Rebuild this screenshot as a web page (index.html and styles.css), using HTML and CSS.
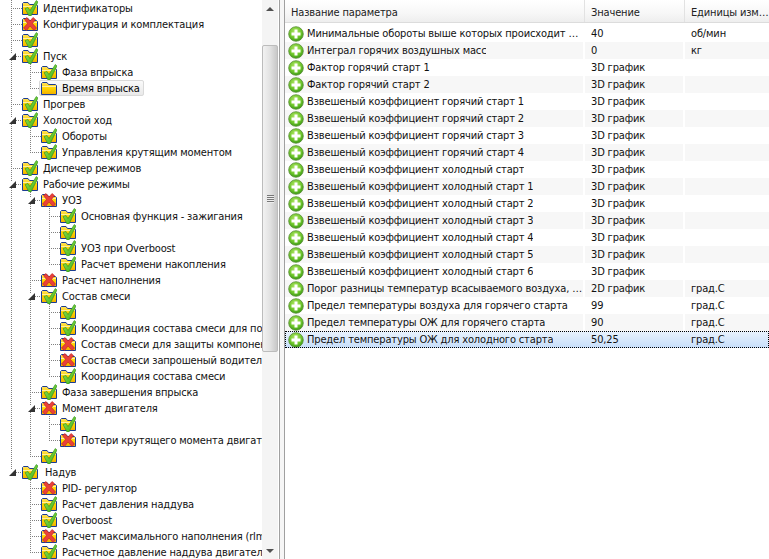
FILE: index.html
```html
<!DOCTYPE html>
<html lang="ru">
<head>
<meta charset="utf-8">
<title>Параметры</title>
<link rel="stylesheet" href="styles.css">
</head>
<body>
<svg class="defs" width="0" height="0" aria-hidden="true">
  <defs>
    <linearGradient id="fy" x1="0" y1="0" x2="0" y2="1"><stop offset="0" stop-color="#ffe060"/><stop offset=".5" stop-color="#ffd400"/><stop offset="1" stop-color="#f0ae00"/></linearGradient>
    <linearGradient id="fg" x1="0" y1="0" x2="1" y2="1"><stop offset="0" stop-color="#9fe84e"/><stop offset="1" stop-color="#35ad1a"/></linearGradient>
    <radialGradient id="bg" cx=".45" cy=".35" r=".7"><stop offset="0" stop-color="#b6e86c"/><stop offset=".6" stop-color="#6ec62a"/><stop offset="1" stop-color="#2e8f10"/></radialGradient>
    <symbol id="folder" viewBox="0 0 16 16"><path d="M.5 14.500V3.500l1-1h4.500l1.500 2h7l1 1v9z" fill="url(#fy)" stroke="#1a3c94"/><path d="M1 6.500h14" stroke="#fff0a0"/></symbol>
    <symbol id="ok" viewBox="0 0 16 16"><use href="#folder"/><path d="M3 8.500l3-1 2 3L14.300.5 16 2 9 16H7z" fill="url(#fg)" stroke="#2d8a1e" stroke-width=".6"/></symbol>
    <symbol id="err" viewBox="0 0 16 16"><use href="#folder"/><path d="M2.500 3.500l2.500-2 3 3.500 3-3.500 2.500 2-3 4 4 4.500-2.500 2.500L8 10l-3.500 4.500L1.500 12l4-4.500z" fill="#e8413a" stroke="#c0201c" stroke-width=".6"/></symbol>
    <symbol id="add" viewBox="0 0 16 16"><circle cx="8" cy="8" r="7.300" fill="url(#bg)" stroke="#5d8f3a" stroke-width=".8"/><path d="M6.500 3.500h3v3h3v3h-3v3h-3v-3h-3v-3h3z" fill="#fff"/></symbol>
    <symbol id="tri" viewBox="0 0 6 6"><path d="M6 0v6H0z" fill="#333"/></symbol>
  </defs>
</svg>
<div class="app">
  <div class="tree-pane">
    <div class="tree">
      <div class="row"><i class="c t"></i><svg class="ic"><use href="#ok"/></svg><span class="lbl">Идентификаторы</span></div>
      <div class="row"><i class="c t"></i><svg class="ic"><use href="#err"/></svg><span class="lbl">Конфигурация и комплектация</span></div>
      <div class="row"><i class="c t"></i><svg class="ic"><use href="#ok"/></svg></div>
      <div class="row"><i class="c x"><svg class="tri"><use href="#tri"/></svg></i><svg class="ic"><use href="#ok"/></svg><span class="lbl">Пуск</span></div>
      <div class="row"><i class="c g"></i><i class="c t"></i><svg class="ic"><use href="#ok"/></svg><span class="lbl">Фаза впрыска</span></div>
      <div class="row"><i class="c g"></i><i class="c l"></i><span class="sel"><svg class="ic"><use href="#folder"/></svg><span class="lbl">Время впрыска</span></span></div>
      <div class="row"><i class="c t"></i><svg class="ic"><use href="#ok"/></svg><span class="lbl">Прогрев</span></div>
      <div class="row"><i class="c x"><svg class="tri"><use href="#tri"/></svg></i><svg class="ic"><use href="#ok"/></svg><span class="lbl">Холостой ход</span></div>
      <div class="row"><i class="c g"></i><i class="c t"></i><svg class="ic"><use href="#ok"/></svg><span class="lbl">Обороты</span></div>
      <div class="row"><i class="c g"></i><i class="c l"></i><svg class="ic"><use href="#ok"/></svg><span class="lbl">Управления крутящим моментом</span></div>
      <div class="row"><i class="c t"></i><svg class="ic"><use href="#ok"/></svg><span class="lbl">Диспечер режимов</span></div>
      <div class="row"><i class="c x"><svg class="tri"><use href="#tri"/></svg></i><svg class="ic"><use href="#ok"/></svg><span class="lbl">Рабочие режимы</span></div>
      <div class="row"><i class="c g"></i><i class="c x"><svg class="tri"><use href="#tri"/></svg></i><svg class="ic"><use href="#err"/></svg><span class="lbl">УОЗ</span></div>
      <div class="row"><i class="c g"></i><i class="c g"></i><i class="c t"></i><svg class="ic"><use href="#ok"/></svg><span class="lbl">Основная функция - зажигания</span></div>
      <div class="row"><i class="c g"></i><i class="c g"></i><i class="c t"></i><svg class="ic"><use href="#ok"/></svg></div>
      <div class="row"><i class="c g"></i><i class="c g"></i><i class="c t"></i><svg class="ic"><use href="#ok"/></svg><span class="lbl">УОЗ при Overboost</span></div>
      <div class="row"><i class="c g"></i><i class="c g"></i><i class="c l"></i><svg class="ic"><use href="#ok"/></svg><span class="lbl">Расчет времени накопления</span></div>
      <div class="row"><i class="c g"></i><i class="c t"></i><svg class="ic"><use href="#err"/></svg><span class="lbl">Расчет наполнения</span></div>
      <div class="row"><i class="c g"></i><i class="c x"><svg class="tri"><use href="#tri"/></svg></i><svg class="ic"><use href="#ok"/></svg><span class="lbl">Состав смеси</span></div>
      <div class="row"><i class="c g"></i><i class="c g"></i><i class="c t"></i><svg class="ic"><use href="#ok"/></svg></div>
      <div class="row"><i class="c g"></i><i class="c g"></i><i class="c t"></i><svg class="ic"><use href="#ok"/></svg><span class="lbl">Координация состава смеси для подачи топлива</span></div>
      <div class="row"><i class="c g"></i><i class="c g"></i><i class="c t"></i><svg class="ic"><use href="#err"/></svg><span class="lbl">Состав смеси для защиты компонентов</span></div>
      <div class="row"><i class="c g"></i><i class="c g"></i><i class="c t"></i><svg class="ic"><use href="#err"/></svg><span class="lbl">Состав смеси запрошеный водителем</span></div>
      <div class="row"><i class="c g"></i><i class="c g"></i><i class="c l"></i><svg class="ic"><use href="#ok"/></svg><span class="lbl">Координация состава смеси</span></div>
      <div class="row"><i class="c g"></i><i class="c t"></i><svg class="ic"><use href="#ok"/></svg><span class="lbl">Фаза завершения впрыска</span></div>
      <div class="row"><i class="c g"></i><i class="c x"><svg class="tri"><use href="#tri"/></svg></i><svg class="ic"><use href="#err"/></svg><span class="lbl">Момент двигателя</span></div>
      <div class="row"><i class="c g"></i><i class="c g"></i><i class="c t"></i><svg class="ic"><use href="#ok"/></svg></div>
      <div class="row"><i class="c g"></i><i class="c g"></i><i class="c l"></i><svg class="ic"><use href="#err"/></svg><span class="lbl">Потери крутящего момента двигателя</span></div>
      <div class="row"><i class="c g"></i><i class="c l"></i><svg class="ic"><use href="#ok"/></svg></div>
      <div class="row"><i class="c x end"><svg class="tri"><use href="#tri"/></svg></i><svg class="ic"><use href="#ok"/></svg><span class="lbl lbl-far">Надув</span></div>
      <div class="row"><i class="c"></i><i class="c t"></i><svg class="ic"><use href="#err"/></svg><span class="lbl">PID- регулятор</span></div>
      <div class="row"><i class="c"></i><i class="c t"></i><svg class="ic"><use href="#ok"/></svg><span class="lbl">Расчет давления наддува</span></div>
      <div class="row"><i class="c"></i><i class="c t"></i><svg class="ic"><use href="#ok"/></svg><span class="lbl">Overboost</span></div>
      <div class="row"><i class="c"></i><i class="c t"></i><svg class="ic"><use href="#err"/></svg><span class="lbl">Расчет максимального наполнения (rlmax)</span></div>
      <div class="row"><i class="c"></i><i class="c l"></i><svg class="ic"><use href="#ok"/></svg><span class="lbl">Расчетное давление наддува двигателя</span></div>
    </div>
    <div class="sb">
      <div class="sb-btn"><span class="arr up"></span></div>
      <div class="sb-track"><div class="sb-thumb"><span class="grip"></span></div></div>
      <div class="sb-btn"><span class="arr down"></span></div>
    </div>
  </div>
  <div class="splitter"></div>
  <div class="grid-pane">
    <div class="head">
      <div class="hc">Название параметра</div>
      <div class="hc">Значение</div>
      <div class="hc">Единицы измерения</div>
    </div>
    <div class="rows">
      <div class="gr"><div class="gc n"><svg class="ic"><use href="#add"/></svg><span class="tx">Минимальные обороты выше которых происходит отсечка топлива</span></div><div class="gc">40</div><div class="gc">об/мин</div></div>
      <div class="gr"><div class="gc n"><svg class="ic"><use href="#add"/></svg><span class="tx">Интеграл горячих воздушных масс</span></div><div class="gc">0</div><div class="gc">кг</div></div>
      <div class="gr"><div class="gc n"><svg class="ic"><use href="#add"/></svg><span class="tx">Фактор горячий старт 1</span></div><div class="gc">3D график</div><div class="gc"></div></div>
      <div class="gr"><div class="gc n"><svg class="ic"><use href="#add"/></svg><span class="tx">Фактор горячий старт 2</span></div><div class="gc">3D график</div><div class="gc"></div></div>
      <div class="gr"><div class="gc n"><svg class="ic"><use href="#add"/></svg><span class="tx">Взвешеный коэффициент горячий старт 1</span></div><div class="gc">3D график</div><div class="gc"></div></div>
      <div class="gr"><div class="gc n"><svg class="ic"><use href="#add"/></svg><span class="tx">Взвешеный коэффициент горячий старт 2</span></div><div class="gc">3D график</div><div class="gc"></div></div>
      <div class="gr"><div class="gc n"><svg class="ic"><use href="#add"/></svg><span class="tx">Взвешеный коэффициент горячий старт 3</span></div><div class="gc">3D график</div><div class="gc"></div></div>
      <div class="gr"><div class="gc n"><svg class="ic"><use href="#add"/></svg><span class="tx">Взвешеный коэффициент горячий старт 4</span></div><div class="gc">3D график</div><div class="gc"></div></div>
      <div class="gr"><div class="gc n"><svg class="ic"><use href="#add"/></svg><span class="tx">Взвешеный коэффициент холодный старт</span></div><div class="gc">3D график</div><div class="gc"></div></div>
      <div class="gr"><div class="gc n"><svg class="ic"><use href="#add"/></svg><span class="tx">Взвешеный коэффициент холодный старт 1</span></div><div class="gc">3D график</div><div class="gc"></div></div>
      <div class="gr"><div class="gc n"><svg class="ic"><use href="#add"/></svg><span class="tx">Взвешеный коэффициент холодный старт 2</span></div><div class="gc">3D график</div><div class="gc"></div></div>
      <div class="gr"><div class="gc n"><svg class="ic"><use href="#add"/></svg><span class="tx">Взвешеный коэффициент холодный старт 3</span></div><div class="gc">3D график</div><div class="gc"></div></div>
      <div class="gr"><div class="gc n"><svg class="ic"><use href="#add"/></svg><span class="tx">Взвешеный коэффициент холодный старт 4</span></div><div class="gc">3D график</div><div class="gc"></div></div>
      <div class="gr"><div class="gc n"><svg class="ic"><use href="#add"/></svg><span class="tx">Взвешеный коэффициент холодный старт 5</span></div><div class="gc">3D график</div><div class="gc"></div></div>
      <div class="gr"><div class="gc n"><svg class="ic"><use href="#add"/></svg><span class="tx">Взвешеный коэффициент холодный старт 6</span></div><div class="gc">3D график</div><div class="gc"></div></div>
      <div class="gr"><div class="gc n"><svg class="ic"><use href="#add"/></svg><span class="tx">Порог разницы температур всасываемого воздуха, для горячего старта</span></div><div class="gc">2D график</div><div class="gc">град.С</div></div>
      <div class="gr"><div class="gc n"><svg class="ic"><use href="#add"/></svg><span class="tx">Предел температуры воздуха для горячего старта</span></div><div class="gc">99</div><div class="gc">град.С</div></div>
      <div class="gr"><div class="gc n"><svg class="ic"><use href="#add"/></svg><span class="tx">Предел температуры ОЖ для горячего старта</span></div><div class="gc">90</div><div class="gc">град.С</div></div>
      <div class="gr cur"><div class="gc n"><svg class="ic"><use href="#add"/></svg><span class="tx">Предел температуры ОЖ для холодного старта</span></div><div class="gc">50,25</div><div class="gc">град.С</div></div>
    </div>
  </div>
</div>
</body>
</html>
```

FILE: styles.css
```css
* { box-sizing: border-box; }
html, body { margin: 0; height: 100%; overflow: hidden; background: #fff; }
body { font: 11px/16px "DejaVu Sans Condensed", "DejaVu Sans", sans-serif; font-stretch: condensed; letter-spacing: -0.15px; color: #111; }
.defs { display: block; height: 0; }
.app { display: flex; height: 559px; }

.tree-pane { flex: 0 0 279px; display: flex; }
.tree { flex: 0 0 262px; overflow: hidden; padding-left: 3px; }
.row { display: flex; align-items: center; height: 16px; white-space: nowrap; }
.ic { flex: none; width: 16px; height: 16px; display: block; }
.lbl { margin-left: 5px; padding-top: 2px; }
.lbl-far { margin-left: 7px; }

.c { flex: none; width: 19px; height: 16px; display: flex; align-items: center; padding-left: 8px; }
.g, .t, .x { background: linear-gradient(#808080 50%, transparent 50%) 8px 0 / 1px 2px repeat-y; }
.l, .end { background: linear-gradient(#fff, #fff) 0 9px / 100% 7px no-repeat, linear-gradient(#808080 50%, transparent 50%) 8px 0 / 1px 2px repeat-y; }
.t::after, .l::after, .x::after { content: ""; flex: 1; height: 1px; background: linear-gradient(to right, #808080 50%, transparent 50%) 0 0 / 2px 1px repeat-x; }
.tri { flex: none; width: 7px; height: 7px; margin-left: -2px; background: #fff; }

.sel { display: flex; align-items: center; height: 16px; margin-left: -2px; padding: 0 3px 0 1px; border: 1px solid #d9d9d9; border-radius: 2px; background: linear-gradient(#fafafa, #e9e9e9); color: #000; }
.sel .ic { margin: -1px 0; }

.sb { flex: 0 0 17px; display: flex; flex-direction: column; background: #f4f4f4; border-right: 1px solid #fff; }
.sb-btn { flex: 0 0 17px; display: flex; align-items: center; justify-content: center; }
.arr { width: 0; height: 0; border-left: 4px solid transparent; border-right: 4px solid transparent; }
.arr.up { border-bottom: 4px solid #505050; }
.arr.down { border-top: 4px solid #505050; }
.sb-track { flex: 1; padding-top: 28px; }
.sb-thumb { height: 307px; display: flex; align-items: center; justify-content: center; border: 1px solid #bcbcbc; border-radius: 2px; background: linear-gradient(to right, #f2f2f2, #e2e2e2 50%, #c8c8c8); }
.grip { width: 7px; height: 8px; background: repeating-linear-gradient(#777 0 1px, #eee 1px 2px); }

.splitter { flex: 0 0 6px; border-left: 1px solid #a0a0a0; border-right: 1px solid #a0a0a0; background: #f6f6f6; }

.grid-pane { flex: 1; min-width: 0; }
.head { display: grid; grid-template-columns: 300px 100px 1fr; height: 23px; margin-bottom: 2px; background: linear-gradient(#fff, #f7f7f7 60%, #eeeeee); border-bottom: 1px solid #dcdcdc; }
.hc { line-height: 26px; padding-left: 6px; border-right: 1px solid #e2e2e2; white-space: nowrap; overflow: hidden; text-overflow: ellipsis; color: #222; }
.hc:last-child { border-right: 0; }
.gr { display: grid; grid-template-columns: 298px 98px 1fr; column-gap: 2px; height: 17px; line-height: 18px; }
.gr:nth-child(even) .gc { background: #f7f7f7; }
.gc { padding-left: 6px; white-space: nowrap; overflow: hidden; min-width: 0; }
.n { display: flex; align-items: center; gap: 3px; padding-left: 3px; }
.tx { overflow: hidden; text-overflow: ellipsis; min-width: 0; }
.gr.cur { background: linear-gradient(#eaf3fd, #c6defa); outline: 1px dotted #000; outline-offset: -1px; }
.gr.cur .gc { background: transparent; }
```
